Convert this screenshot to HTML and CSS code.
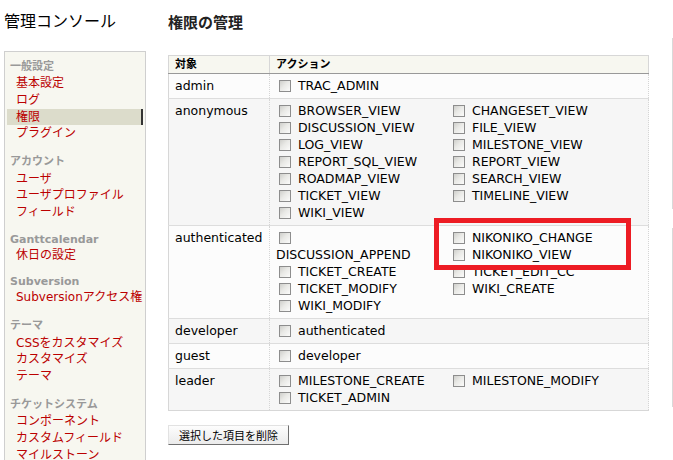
FILE: index.html
```html
<!DOCTYPE html>
<html lang="ja">
<head>
<meta charset="utf-8">
<title>管理コンソール</title>
<link rel="stylesheet" href="styles.css">
</head>
<body>
<div class="page">
  <div class="left">
    <h1 class="console-title">管理コンソール</h1>
    <nav class="tabs">
      <div class="group">
        <div class="group-title">一般設定</div>
        <a class="tab" href="#">基本設定</a>
        <a class="tab" href="#">ログ</a>
        <a class="tab active" href="#">権限</a>
        <a class="tab" href="#">プラグイン</a>
      </div>
      <div class="group">
        <div class="group-title">アカウント</div>
        <a class="tab" href="#">ユーザ</a>
        <a class="tab" href="#">ユーザプロファイル</a>
        <a class="tab" href="#">フィールド</a>
      </div>
      <div class="group">
        <div class="group-title latin">Ganttcalendar</div>
        <a class="tab" href="#">休日の設定</a>
      </div>
      <div class="group">
        <div class="group-title latin">Subversion</div>
        <a class="tab" href="#">Subversionアクセス権</a>
      </div>
      <div class="group">
        <div class="group-title">テーマ</div>
        <a class="tab" href="#">CSSをカスタマイズ</a>
        <a class="tab" href="#">カスタマイズ</a>
        <a class="tab" href="#">テーマ</a>
      </div>
      <div class="group">
        <div class="group-title">チケットシステム</div>
        <a class="tab" href="#">コンポーネント</a>
        <a class="tab" href="#">カスタムフィールド</a>
        <a class="tab" href="#">マイルストーン</a>
      </div>
    </nav>
  </div>

  <div class="main">
    <h2 class="main-title">権限の管理</h2>
    <table class="perm-table">
      <thead>
        <tr><th class="subject">対象</th><th>アクション</th></tr>
      </thead>
      <tbody>
        <tr class="even">
          <td>admin</td>
          <td><div class="perms">
            <label class="perm"><input type="checkbox"> TRAC_ADMIN</label>
          </div></td>
        </tr>
        <tr class="odd">
          <td>anonymous</td>
          <td><div class="perms">
            <label class="perm"><input type="checkbox"> BROWSER_VIEW</label>
            <label class="perm"><input type="checkbox"> CHANGESET_VIEW</label>
            <label class="perm"><input type="checkbox"> DISCUSSION_VIEW</label>
            <label class="perm"><input type="checkbox"> FILE_VIEW</label>
            <label class="perm"><input type="checkbox"> LOG_VIEW</label>
            <label class="perm"><input type="checkbox"> MILESTONE_VIEW</label>
            <label class="perm"><input type="checkbox"> REPORT_SQL_VIEW</label>
            <label class="perm"><input type="checkbox"> REPORT_VIEW</label>
            <label class="perm"><input type="checkbox"> ROADMAP_VIEW</label>
            <label class="perm"><input type="checkbox"> SEARCH_VIEW</label>
            <label class="perm"><input type="checkbox"> TICKET_VIEW</label>
            <label class="perm"><input type="checkbox"> TIMELINE_VIEW</label>
            <label class="perm"><input type="checkbox"> WIKI_VIEW</label>
          </div></td>
        </tr>
        <tr class="even">
          <td>authenticated</td>
          <td><div class="perms">
            <label class="perm"><input type="checkbox"> DISCUSSION_APPEND</label>
            <label class="perm"><input type="checkbox"> NIKONIKO_CHANGE</label>
            <label class="perm"><input type="checkbox"> NIKONIKO_VIEW</label>
            <label class="perm"><input type="checkbox"> TICKET_CREATE</label>
            <label class="perm"><input type="checkbox"> TICKET_EDIT_CC</label>
            <label class="perm"><input type="checkbox"> TICKET_MODIFY</label>
            <label class="perm"><input type="checkbox"> WIKI_CREATE</label>
            <label class="perm"><input type="checkbox"> WIKI_MODIFY</label>
          </div></td>
        </tr>
        <tr class="odd">
          <td>developer</td>
          <td><div class="perms">
            <label class="perm"><input type="checkbox"> authenticated</label>
          </div></td>
        </tr>
        <tr class="even">
          <td>guest</td>
          <td><div class="perms">
            <label class="perm"><input type="checkbox"> developer</label>
          </div></td>
        </tr>
        <tr class="odd">
          <td>leader</td>
          <td><div class="perms">
            <label class="perm"><input type="checkbox"> MILESTONE_CREATE</label>
            <label class="perm"><input type="checkbox"> MILESTONE_MODIFY</label>
            <label class="perm"><input type="checkbox"> TICKET_ADMIN</label>
          </div></td>
        </tr>
      </tbody>
    </table>
    <div class="actions">
      <button type="button" class="btn">選択した項目を削除</button>
    </div>
  </div>

  <div class="side">
    <div class="fieldset fs-grant"></div>
    <div class="fieldset fs-group"></div>
  </div>
</div>
<div class="annotation"></div>
</body>
</html>
```
FILE: styles.css
```css
html, body {
  margin: 0;
  padding: 0;
  overflow: hidden;
  background: #fff;
}
body {
  font-family: "DejaVu Sans", "Noto Sans CJK JP", sans-serif;
  font-size: 12.5px;
  color: #000;
}
.page {
  display: flex;
  align-items: flex-start;
  width: 1000px;
}

/* left column */
.left {
  flex: none;
  width: 142px;
  padding-left: 4px;
}
.console-title {
  margin: 10px 0 0;
  font: normal 16px/20px "Noto Sans CJK JP", sans-serif;
  color: #000;
}
.tabs {
  margin-top: 21px;
  border: 1px solid #cfcfcf;
  background: #f7f7f0;
  padding: 6.5px 0 20px;
}
.group {
  margin-bottom: 12px;
}
.group-title {
  padding-left: 5px;
  font: bold 11px/16.6px "DejaVu Sans", "Noto Sans CJK JP", sans-serif;
  color: #999;
}
.group-title.latin {
  line-height: 14px;
}
.tab {
  display: block;
  margin: 0 2px;
  padding-left: 9px;
  font: 12px/16.7px "DejaVu Sans", "Noto Sans CJK JP", sans-serif;
  color: #b00;
  text-decoration: none;
  white-space: nowrap;
}
.tab.active {
  background: #dcdccb;
  border-right: 2px solid #333;
  color: #b00;
}

/* main column */
.main {
  flex: none;
  width: 481px;
  margin-left: 22px;
}
.main-title {
  margin: 12px 0 0;
  font: bold 15px/20px "Noto Sans CJK JP", sans-serif;
  color: #222;
}
.perm-table {
  margin-top: 23px;
  width: 481px;
  border-collapse: collapse;
  border-spacing: 0;
  table-layout: fixed;
  border-left: 1px solid #d7d7d7;
  border-top: 1px solid #d7d7d7;
  border-bottom: 1px solid #d7d7d7;
}
.perm-table th {
  background: #f7f7f0;
  border: 1px solid #d7d7d7;
  border-bottom-color: #999;
  font: bold 11px/13px "DejaVu Sans", "Noto Sans CJK JP", sans-serif;
  padding: 2px 6px;
  text-align: left;
  vertical-align: bottom;
}
.perm-table th.subject {
  width: 88px;
}
.perm-table tbody tr {
  border-top: 1px solid #ddd;
}
.perm-table tbody tr.even {
  background: #fcfcfc;
}
.perm-table tbody tr.odd {
  background: #f6f6f6;
}
.perm-table td {
  border: 1px dotted #d5d5d5;
  padding: 3px 6px 4px;
  vertical-align: top;
  line-height: 17px;
}
.perms {
  display: flow-root;
}
.perm {
  float: left;
  width: 153px;
  margin-right: 21px;
}
.perm input {
  -webkit-appearance: none;
  appearance: none;
  box-sizing: border-box;
  width: 12px;
  height: 12px;
  margin: 0 3px;
  vertical-align: -2px;
  border: 1px solid #8d8d8d;
  background: linear-gradient(135deg, #cfcfcb 0%, #e9e9e6 45%, #fbfbfa 100%);
}

.actions {
  margin-top: 14px;
}
.btn {
  height: 20px;
  padding: 0 10px;
  font: 11px/16px "Noto Sans CJK JP", sans-serif;
  color: #000;
  border: 1px solid;
  border-color: #e2e2e2 #6f6f6f #6f6f6f #e2e2e2;
  background: linear-gradient(#fdfdfd, #ebebeb);
  border-radius: 0;
}

/* right (cut-off) forms */
.side {
  flex: none;
  width: 220px;
  margin-left: 23px;
}
.fieldset {
  border: 1px solid #d9d9d9;
}
.fs-grant {
  margin-top: 38px;
  height: 169px;
}
.fs-group {
  margin-top: 19px;
  height: 177px;
}

/* red highlight annotation drawn over the screenshot */
.annotation {
  position: absolute;
  left: 434px;
  top: 218px;
  width: 197px;
  height: 52px;
  box-sizing: border-box;
  border: 5px solid #ed1c24;
}
```
